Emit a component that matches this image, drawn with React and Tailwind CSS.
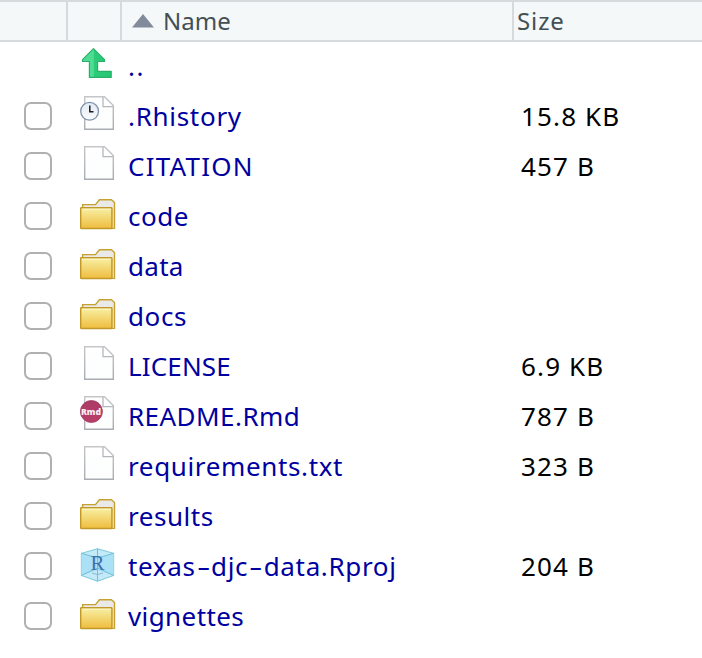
import React from "react";

function Page() {
  return (
    <>
      <path d="M4.7 1.7H24.5L33.3 10.5V34.3H4.7Z" fill="url(#paper)" stroke="url(#edge)" strokeWidth="1.4" />
      <path d="M23 2V11.7H33.3" fill="#fff" stroke="#b4b7bd" strokeWidth="1.3" />
    </>
  );
}

function Folder() {
  return (
    <>
      <path d="M2.6 14V9.6H15.5L19.4 4.7H31.4L34.5 7.6V33.3H30Z" fill="#e9e9e7" stroke="#c7a12f" strokeWidth="1.4" />
      <path d="M31 14H33.8V32.8H31Z" fill="#eedb98" />
      <rect x="0.7" y="12.7" width="31.2" height="20.8" rx="0.6" fill="url(#folder)" stroke="#c2982a" strokeWidth="1.4" />
      <path d="M2 14.2H30.8" stroke="#fdf8c8" strokeWidth="1" />
    </>
  );
}

function UpArrow() {
  return (
    <>
      <path
        d="M13.5 3.6L24.5 14.6V16.5H17.6V26.3H31.2V32.4H9.4V16.5H2.5V14.6Z"
        fill="url(#green)"
        stroke="#29b16b"
        strokeWidth="1.2"
        strokeLinejoin="round"
      />
    </>
  );
}

function History() {
  return (
    <>
      <Page />
      <circle cx="9.6" cy="16.3" r="8.9" fill="url(#clock)" stroke="#8093ac" strokeWidth="1.3" />
      <path d="M9.8 10.5V16.8H13.5" fill="none" stroke="#1c1c1c" strokeWidth="1.5" />
    </>
  );
}

function Rmd() {
  return (
    <>
      <Page />
      <circle cx="11.4" cy="16.5" r="11" fill="url(#berry)" stroke="#a03a60" strokeWidth="0.8" />
      <text x="11" y="19.8" textAnchor="middle" textLength="20" lengthAdjust="spacingAndGlyphs" className="fill-[#fbeff3] font-['Open_Sans',sans-serif] text-[9.5px] font-extrabold">Rmd</text>
    </>
  );
}

function Cube() {
  return (
    <>
      <path d="M17.5 3.8L33.6 8.3V30.4L17.5 36.2L1.4 30.4V8.3Z" fill="#c4e9f8" stroke="#7bc9d8" strokeWidth="1.1" />
      <path d="M1.4 8.3L17.5 13L33.6 8.3V30.4L17.5 25L1.4 30.4Z" fill="#abe1f7" />
      <path d="M1.4 8.3L17.5 13L33.6 8.3M17.5 3.8V36.2M1.4 30.4L17.5 23L33.6 30.4" fill="none" stroke="#62bdcd" strokeWidth="0.9" />
      <path d="M12 28Q17.5 31 23 28" fill="none" stroke="#86b8d4" strokeWidth="1" />
      <text x="17.5" y="24.6" textAnchor="middle" className="fill-[#4070b0] font-['Liberation_Serif',serif] text-[21px]">R</text>
    </>
  );
}

const icons = { page: Page, folder: Folder, up: UpArrow, history: History, rmd: Rmd, cube: Cube };

const files = [
  { name: ".Rhistory", size: "15.8 KB", icon: "history", spacing: "tracking-[0.7px]" },
  { name: "CITATION", size: "457 B", icon: "page", spacing: "tracking-[1.2px]" },
  { name: "code", icon: "folder", spacing: "tracking-[0.5px]" },
  { name: "data", icon: "folder", spacing: "tracking-[0.3px]" },
  { name: "docs", icon: "folder", spacing: "tracking-[0.6px]" },
  { name: "LICENSE", size: "6.9 KB", icon: "page", spacing: "tracking-[0.15px]" },
  { name: "README.Rmd", size: "787 B", icon: "rmd", spacing: "tracking-[0.45px]" },
  { name: "requirements.txt", size: "323 B", icon: "page", spacing: "tracking-[0.64px]" },
  { name: "results", icon: "folder", spacing: "tracking-[0.55px]" },
  { name: "texas-djc-data.Rproj", size: "204 B", icon: "cube", spacing: "tracking-[0.65px]" },
  { name: "vignettes", icon: "folder", spacing: "tracking-[0.4px]" },
];

function Icon({ kind }) {
  const Drawing = icons[kind];
  return (
    <svg width="38" height="38" viewBox="0 0 38 38" className="mt-1 shrink-0">
      <Drawing />
    </svg>
  );
}

// File name with its hyphens drawn wide.
function FileName({ text }) {
  return text.split(/(-)/).map((part, i) =>
    part === "-" ? (
      <span key={i} className="inline-block w-[15.5px] scale-x-160 text-center tracking-normal">-</span>
    ) : (
      <span key={i}>{part}</span>
    )
  );
}

function Gradients() {
  return (
    <svg width="0" height="0" className="absolute">
      <defs>
        <linearGradient id="paper" x1="0" y1="0" x2="0" y2="1">
          <stop offset="0" stopColor="#fff" />
          <stop offset="1" stopColor="#fcfdfd" />
        </linearGradient>
        <linearGradient id="edge" x1="0" y1="0" x2="0" y2="1">
          <stop offset="0" stopColor="#c4c6c8" />
          <stop offset="1" stopColor="#a9adb3" />
        </linearGradient>
        <linearGradient id="folder" x1="0" y1="0" x2="0" y2="1">
          <stop offset="0" stopColor="#f8f0a6" />
          <stop offset="1" stopColor="#efbd3e" />
        </linearGradient>
        <linearGradient id="green" x1="0" y1="0" x2="1" y2="0">
          <stop offset="0" stopColor="#4edc92" />
          <stop offset="0.38" stopColor="#4edc92" />
          <stop offset="0.4" stopColor="#2ccb79" />
          <stop offset="1" stopColor="#25c671" />
        </linearGradient>
        <linearGradient id="clock" x1="0" y1="0" x2="0" y2="1">
          <stop offset="0" stopColor="#e3eaf3" />
          <stop offset="1" stopColor="#fafcff" />
        </linearGradient>
        <linearGradient id="berry" x1="0" y1="0" x2="0" y2="1">
          <stop offset="0" stopColor="#a93c66" />
          <stop offset="1" stopColor="#b93e68" />
        </linearGradient>
      </defs>
    </svg>
  );
}

export default function App() {
  return (
    <div className="h-[658px] w-[702px] overflow-hidden bg-white font-['Noto_Sans',sans-serif]">
      <Gradients />
      <header className="flex h-[42px] border-y-2 border-[#d6dadc] bg-[#f4f8f9] text-2xl text-[#434f54]">
        <div className="w-[68px] border-r-2 border-[#d6dadc]" />
        <div className="w-[54px] border-r-2 border-[#d6dadc]" />
        <div className="flex w-[392px] items-center border-r-2 border-[#d6dadc] pl-[10px]">
          <svg width="22" height="14" viewBox="0 0 22 14" className="mr-[9px]">
            <path d="M11 0L22 13.5H0Z" fill="#818b9b" />
          </svg>
          <span>Name</span>
        </div>
        <div className="flex items-center pl-[3px]">
          <span className="tracking-[0.9px]">Size</span>
        </div>
      </header>
      <main className="-mt-px text-[26px] leading-[50px] text-[#0000a0]">
        <div className="flex h-[50px] pl-20">
          <Icon kind="up" />
          <span className="pl-2.5 tracking-[1.5px]">..</span>
        </div>
        {files.map((file) => (
          <div key={file.name} className="flex h-[50px] pl-6">
            <button aria-label={file.name} className="mt-[11px] size-7 rounded-[7px] border-2 border-[#b0b0b0] bg-white" />
            <div className="flex w-[469px] pl-7">
              <Icon kind={file.icon} />
              <a className={"pl-2.5 whitespace-pre " + file.spacing}>
                <FileName text={file.name} />
              </a>
            </div>
            <span className="whitespace-pre tracking-[1.15px] text-black">{file.size}</span>
          </div>
        ))}
      </main>
    </div>
  );
}
